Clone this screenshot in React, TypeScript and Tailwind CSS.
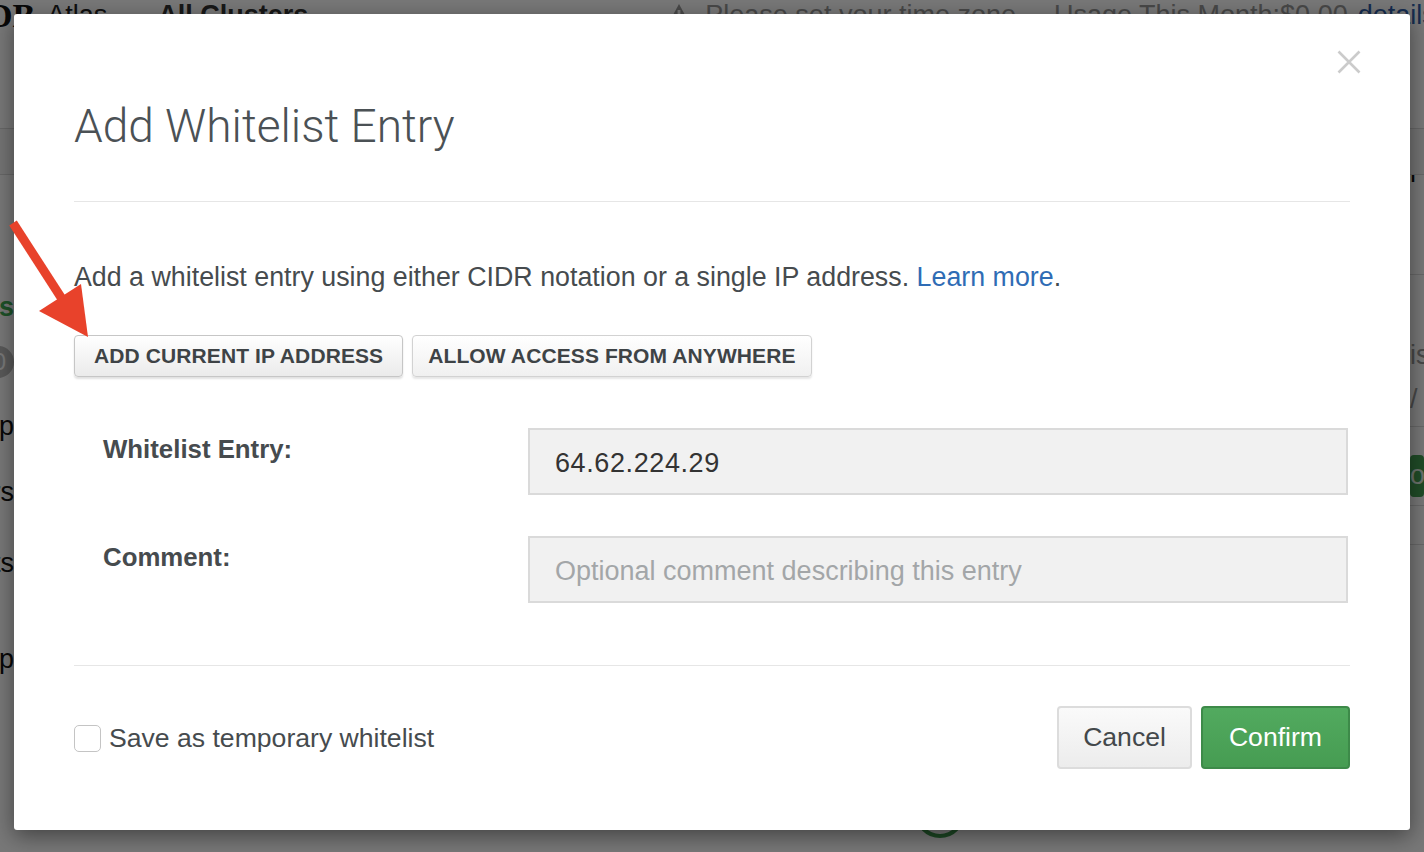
import React, { useState } from 'react';

const sans = "font-['Liberation_Sans',Arial,Helvetica,sans-serif]";

const BackgroundPage: React.FC = () => {
  return (
    <div className="flex h-full flex-col bg-white text-[#222]">
      {/* Top bar (mostly hidden by the modal) */}
      <header className="-mt-[15px] flex h-[60px] shrink-0 items-center text-[27px] whitespace-nowrap">
        <span className="-ml-[12px] font-['Liberation_Serif',serif] text-[34px] font-bold text-[#111]">DB</span>
        <span className="ml-[12px] text-[#222]">Atlas</span>
        <span className="ml-[51px] font-bold text-[#333]">All Clusters</span>
        <span className="ml-[358px] flex items-center text-[#9a9a9a]">
          <svg width="26" height="24" viewBox="0 0 26 24">
            <path d="M13 1 L25 23 L1 23 Z" fill="#9a9a9a" />
            <rect x="11.6" y="7" width="2.8" height="9" fill="#fff" />
            <rect x="11.6" y="18" width="2.8" height="2.8" fill="#fff" />
          </svg>
          <span className="ml-[13px]">Please set your time zone</span>
        </span>
        <span className="ml-[38px] text-[#9a9a9a]">Usage This Month:$0.00</span>
        <span className="ml-[10px] text-[#2f5ea8]">details</span>
      </header>

      <div className="h-[83px] shrink-0" />
      <div className="h-[47px] shrink-0 border-y border-[#dcdcdc] bg-[#f6f6f6]" />

      <div className="flex flex-1">
        {/* left navigation peeking out */}
        <div className="flex w-[14px] shrink-0 flex-col items-end overflow-hidden whitespace-nowrap text-[27px]">
          <span className="mt-[112px] font-bold text-[#3fae55]">Clusters</span>
          <span className="mt-[18px] flex h-[32px] items-center rounded-full bg-[#bdbdbd] px-[8px] text-[24px] text-white">
            10
          </span>
          <span className="mt-[28px] text-[#111]">Backup</span>
          <span className="mt-[26px] text-[#111]">Users</span>
          <span className="mt-[30px] text-[#111]">Alerts</span>
          <span className="mt-[56px] text-[#111]">Ap</span>
        </div>

        {/* main content hidden behind the modal */}
        <div className="flex flex-1 flex-col">
          <div className="mt-auto mb-[14px] ml-[901px] h-[50px] w-[50px] rounded-full border-[4px] border-[#3e9a4e]" />
        </div>

        {/* right column peeking out */}
        <div className="flex w-[14px] shrink-0 flex-col overflow-hidden whitespace-nowrap text-[27px]">
          <span className="-mt-[22px] text-[#111]">l Invite</span>
          <div className="mt-[80px] border-t border-[#ddd]" />
          <span className="mt-[60px] text-[#999]">is list</span>
          <span className="mt-[4px] text-[#999]">/ view</span>
          <div className="mt-[6px] border-t border-[#ddd]" />
          <span className="mt-[28px] flex h-[42px] items-center rounded-[4px] bg-[#45a254] text-[#e7f4e9]">
            on
          </span>
          <div className="mt-[8px] border-t border-[#ddd]" />
          <div className="mt-[38px] border-t border-[#ddd]" />
        </div>
      </div>
    </div>
  );
};

const Arrow: React.FC = () => (
  <svg className="pointer-events-none absolute left-0 top-[210px]" width="100" height="135" viewBox="0 210 100 135">
    <line x1="13" y1="223" x2="64" y2="302" stroke="#e8422b" strokeWidth="9" />
    <polygon points="39,311 81,284 88,337" fill="#e8422b" />
  </svg>
);

const App: React.FC = () => {
  const [temporary, setTemporary] = useState(false);
  const [entry, setEntry] = useState('64.62.224.29');
  const [comment, setComment] = useState('');

  return (
    <div className={`relative h-[852px] w-full overflow-hidden ${sans}`}>
      <BackgroundPage />

      {/* dim overlay */}
      <div className="absolute inset-0 bg-black/[0.53]" />

      {/* Modal */}
      <div className="absolute left-[14px] top-[14px] flex h-[816px] w-[1396px] flex-col rounded-[3px] bg-white px-[60px] text-[#464b4e] shadow-[0_6px_22px_rgba(0,0,0,0.45)]">
        {/* Header */}
        <div className="relative border-b border-[#e6e6e6] pt-[86px] pb-[49px]">
          <h1 className="font-['Roboto',sans-serif] text-[46px] leading-[52px] font-light text-[#4b5155]">
            Add Whitelist Entry
          </h1>
          <button className="absolute right-[-11px] top-[36px] h-[24px] w-[24px]" aria-label="Close">
            <svg width="24" height="24" viewBox="0 0 24 24">
              <path d="M1.5 1.5 L22.5 22.5 M22.5 1.5 L1.5 22.5" stroke="#cbcbcb" strokeWidth="2.6" />
            </svg>
          </button>
        </div>

        {/* Body */}
        <div className="border-b border-[#e6e6e6] pt-[57px] pb-[62px]">
          <p className="text-[26.8px] leading-[36px]">
            Add a whitelist entry using either CIDR notation or a single IP address.{' '}
            <a href="#" className="text-[#2f6cb5]">Learn more</a>.
          </p>

          <div className="mt-[40px] flex gap-[9px]">
            <button className="h-[42px] rounded-[4px] border border-[#c6c6c6] bg-gradient-to-b from-white to-[#ebebeb] px-[19px] text-[21px] font-bold tracking-[0.1px] text-[#3e4346] shadow-[0_2px_2px_rgba(0,0,0,0.12)]">
              ADD CURRENT IP ADDRESS
            </button>
            <button className="h-[42px] rounded-[4px] border border-[#d2d2d2] bg-gradient-to-b from-white to-[#f0f0f0] px-[15px] text-[21px] font-bold tracking-[0.1px] text-[#3e4346] shadow-[0_2px_2px_rgba(0,0,0,0.1)]">
              ALLOW ACCESS FROM ANYWHERE
            </button>
          </div>

          <div className="mt-[51px] mr-[2px] flex flex-col gap-[41px]">
            <div className="flex">
              <label className="w-[454px] shrink-0 pt-[3px] pl-[29px] text-[25.8px] leading-[36px] font-bold">
                Whitelist Entry:
              </label>
              <input
                value={entry}
                onChange={(e) => setEntry(e.target.value)}
                className="h-[67px] flex-1 border-2 border-[#dadada] bg-[#f1f1f1] px-[25px] pt-[3px] text-[27px] tracking-[0.6px] text-[#333] outline-none"
              />
            </div>
            <div className="flex">
              <label className="w-[454px] shrink-0 pt-[3px] pl-[29px] text-[25.8px] leading-[36px] font-bold">
                Comment:
              </label>
              <input
                value={comment}
                onChange={(e) => setComment(e.target.value)}
                placeholder="Optional comment describing this entry"
                className="h-[67px] flex-1 border-2 border-[#dadada] bg-[#f1f1f1] px-[25px] pt-[3px] text-[27px] text-[#333] outline-none placeholder:text-[#a3a6a8]"
              />
            </div>
          </div>
        </div>

        {/* Footer */}
        <div className="flex items-center justify-between pt-[40px]">
          <label className="flex items-center gap-[8px] pt-[3px] text-[26.6px]">
            <input
              type="checkbox"
              checked={temporary}
              onChange={(e) => setTemporary(e.target.checked)}
              className="h-[27px] w-[27px] appearance-none rounded-[5px] border border-[#c4c4c4] bg-white"
            />
            Save as temporary whitelist
          </label>
          <div className="flex gap-[9px]">
            <button className="h-[63px] rounded-[4px] border-2 border-[#dcdcdc] bg-gradient-to-b from-[#fafafa] to-[#ececec] px-[24px] text-[26.6px] text-[#43484b]">
              Cancel
            </button>
            <button className="h-[63px] rounded-[4px] border-2 border-[#3d8a49] bg-gradient-to-b from-[#52aa5f] to-[#469c52] px-[26px] text-[26.6px] text-white">
              Confirm
            </button>
          </div>
        </div>
      </div>

      <Arrow />
    </div>
  );
};

export default App;
